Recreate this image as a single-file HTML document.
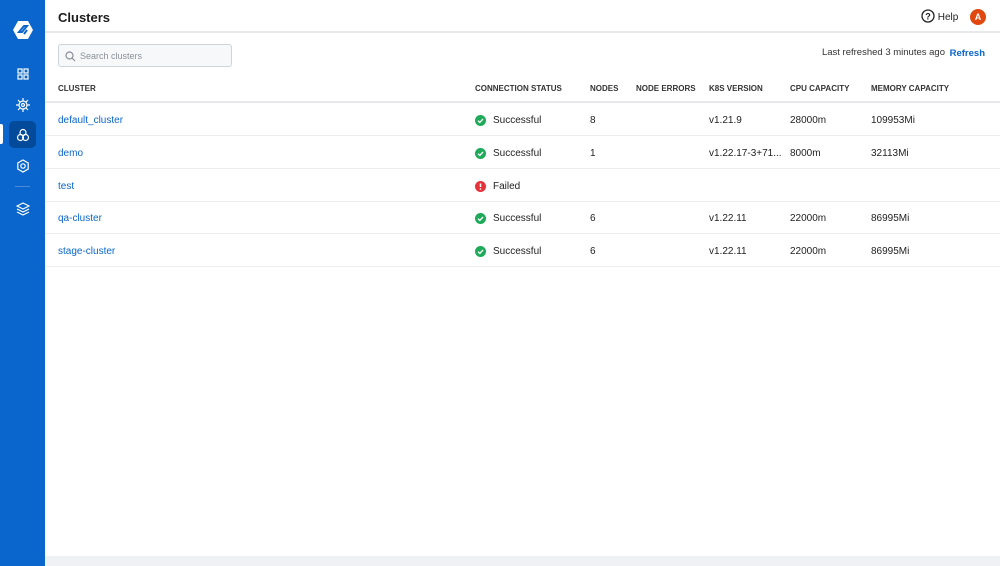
<!DOCTYPE html>
<html><head><style>
*{box-sizing:border-box;margin:0;padding:0}
body{width:1000px;height:566px;overflow:hidden;font-family:"Liberation Sans",sans-serif;background:#fff;position:relative;color:#222}
.sb{position:absolute;left:0;top:0;width:45px;height:566px;background:#0a66cc}
.ic{position:absolute;left:9px;width:27px;height:27px;display:flex;align-items:center;justify-content:center}
.top{position:absolute;left:45px;top:0;right:0;height:33px;border-bottom:2px solid #e6e8eb}
h1{position:absolute;left:58px;top:10px;font-size:13px;font-weight:bold;color:#1c1c1c}
.search{position:absolute;left:58px;top:44px;width:174px;height:23px;border:1px solid #cfd4da;border-radius:3px;background:#f6f8fa;font-size:9px;color:#8a9099;padding:6px 0 0 21px}
.row{position:absolute;left:45px;right:0;height:33px;border-bottom:1px solid #ebedf0;font-size:10px}
.row span{position:absolute;top:1px;height:32px;display:flex;align-items:center}
.hdr span{font-size:8px;font-weight:bold;color:#333;height:13px;top:-8px}
a{color:#0a66cc;text-decoration:none}
.row svg.d{margin-right:7px}
</style></head><body>
<div class="sb">
<div class="ic" style="top:16px"><svg width="22" height="22" viewBox="0 0 22 22"><path d="M6 2h10l5 9-5 9H6l-5-9z" fill="#fff"/><path d="M7 13l5-6h3l-5 6zM12 15l3-4" stroke="#0a66cc" stroke-width="2" fill="none"/></svg></div>
<div class="ic" style="top:60px"><svg width="12" height="12" viewBox="0 0 12 12" fill="none" stroke="#fff" stroke-width="1.2"><rect x="1" y="1" width="4" height="4"/><rect x="7" y="1" width="4" height="4"/><rect x="1" y="7" width="4" height="4"/><rect x="7" y="7" width="4" height="4"/></svg></div>
<div class="ic" style="top:91px"><svg width="14" height="14" viewBox="0 0 14 14" fill="none" stroke="#fff" stroke-width="1.2"><circle cx="7" cy="7" r="4"/><circle cx="7" cy="7" r="1.5"/><path d="M7 0v3M7 11v3M0 7h3M11 7h3M2 2l2 2M10 10l2 2M2 12l2-2M10 4l2-2"/></svg></div>
<div class="ic" style="top:121px;background:#034a9a;border-radius:5px"><svg width="14" height="14" viewBox="0 0 14 14" fill="none" stroke="#fff" stroke-width="1.2"><circle cx="7" cy="4.5" r="3"/><circle cx="4.5" cy="9.5" r="3"/><circle cx="9.5" cy="9.5" r="3"/></svg></div>
<div style="position:absolute;left:0;top:124px;width:3px;height:20px;background:#fff;border-radius:0 2px 2px 0"></div>
<div class="ic" style="top:152px"><svg width="14" height="14" viewBox="0 0 14 14" fill="none" stroke="#fff" stroke-width="1.2"><path d="M7 1l5.2 3v6L7 13 1.8 10V4z"/><circle cx="7" cy="7" r="2.2"/></svg></div>
<div style="position:absolute;left:15px;top:186px;width:15px;height:1px;background:#4a8ad8"></div>
<div class="ic" style="top:195px"><svg width="14" height="14" viewBox="0 0 14 14" fill="none" stroke="#fff" stroke-width="1.2"><path d="M7 1l6 3-6 3-6-3z M1 7l6 3 6-3 M1 10l6 3 6-3"/></svg></div>
</div>
<div class="top"></div>
<h1>Clusters</h1>
<div style="position:absolute;left:921px;top:9px;font-size:10px;color:#222"><svg width="14" height="14" viewBox="0 0 14 14" style="vertical-align:-3px"><circle cx="7" cy="7" r="6" fill="none" stroke="#222" stroke-width="1.3"/><text x="7" y="10.5" font-size="9" text-anchor="middle" font-family="Liberation Sans" font-weight="bold" fill="#222">?</text></svg> Help</div>
<div style="position:absolute;left:970px;top:9px;width:16px;height:16px;border-radius:50%;background:#e0480f;color:#fff;font-size:9px;text-align:center;line-height:16px;font-weight:bold">A</div>
<div class="search"><svg width="11" height="11" viewBox="0 0 11 11" style="position:absolute;left:6px;top:6px" fill="none" stroke="#8a9099" stroke-width="1.2"><circle cx="4.5" cy="4.5" r="3.5"/><path d="M7 7l3 3"/></svg>Search clusters</div>
<div style="position:absolute;right:55px;top:47px;font-size:9.5px;color:#333">Last refreshed 3 minutes ago</div>
<div style="position:absolute;right:15px;top:48px;font-size:9.5px;color:#0a66cc;font-weight:bold">Refresh</div>
<div class="row hdr" style="top:90px;height:13px;border-bottom:2px solid #e6e8eb"><span style="left:13px">CLUSTER</span><span style="left:430px">CONNECTION STATUS</span><span style="left:545px">NODES</span><span style="left:591px">NODE ERRORS</span><span style="left:664px">K8S VERSION</span><span style="left:745px">CPU CAPACITY</span><span style="left:826px">MEMORY CAPACITY</span></div>
<div class="row" style="top:103px"><span style="left:13px"><a>default_cluster</a></span><span style="left:430px"><svg class="d" width="11" height="11" viewBox="0 0 11 11"><circle cx="5.5" cy="5.5" r="5.5" fill="#1faa5a"/><path d="M3 5.7l1.8 1.7L8 4" stroke="#fff" stroke-width="1.3" fill="none"/></svg>Successful</span><span style="left:545px">8</span><span style="left:664px">v1.21.9</span><span style="left:745px">28000m</span><span style="left:826px">109953Mi</span></div>
<div class="row" style="top:136px"><span style="left:13px"><a>demo</a></span><span style="left:430px"><svg class="d" width="11" height="11" viewBox="0 0 11 11"><circle cx="5.5" cy="5.5" r="5.5" fill="#1faa5a"/><path d="M3 5.7l1.8 1.7L8 4" stroke="#fff" stroke-width="1.3" fill="none"/></svg>Successful</span><span style="left:545px">1</span><span style="left:664px">v1.22.17-3+71...</span><span style="left:745px">8000m</span><span style="left:826px">32113Mi</span></div>
<div class="row" style="top:169px"><span style="left:13px"><a>test</a></span><span style="left:430px"><svg class="d" width="11" height="11" viewBox="0 0 11 11"><circle cx="5.5" cy="5.5" r="5.5" fill="#e5333b"/><path d="M5.5 2.5v3.5" stroke="#fff" stroke-width="1.5"/><circle cx="5.5" cy="8" r=".8" fill="#fff"/></svg>Failed</span></div>
<div class="row" style="top:201px"><span style="left:13px"><a>qa-cluster</a></span><span style="left:430px"><svg class="d" width="11" height="11" viewBox="0 0 11 11"><circle cx="5.5" cy="5.5" r="5.5" fill="#1faa5a"/><path d="M3 5.7l1.8 1.7L8 4" stroke="#fff" stroke-width="1.3" fill="none"/></svg>Successful</span><span style="left:545px">6</span><span style="left:664px">v1.22.11</span><span style="left:745px">22000m</span><span style="left:826px">86995Mi</span></div>
<div class="row" style="top:234px"><span style="left:13px"><a>stage-cluster</a></span><span style="left:430px"><svg class="d" width="11" height="11" viewBox="0 0 11 11"><circle cx="5.5" cy="5.5" r="5.5" fill="#1faa5a"/><path d="M3 5.7l1.8 1.7L8 4" stroke="#fff" stroke-width="1.3" fill="none"/></svg>Successful</span><span style="left:545px">6</span><span style="left:664px">v1.22.11</span><span style="left:745px">22000m</span><span style="left:826px">86995Mi</span></div>
<div style="position:absolute;left:45px;right:0;top:556px;height:10px;background:#f0f1f4"></div>
</body></html>
